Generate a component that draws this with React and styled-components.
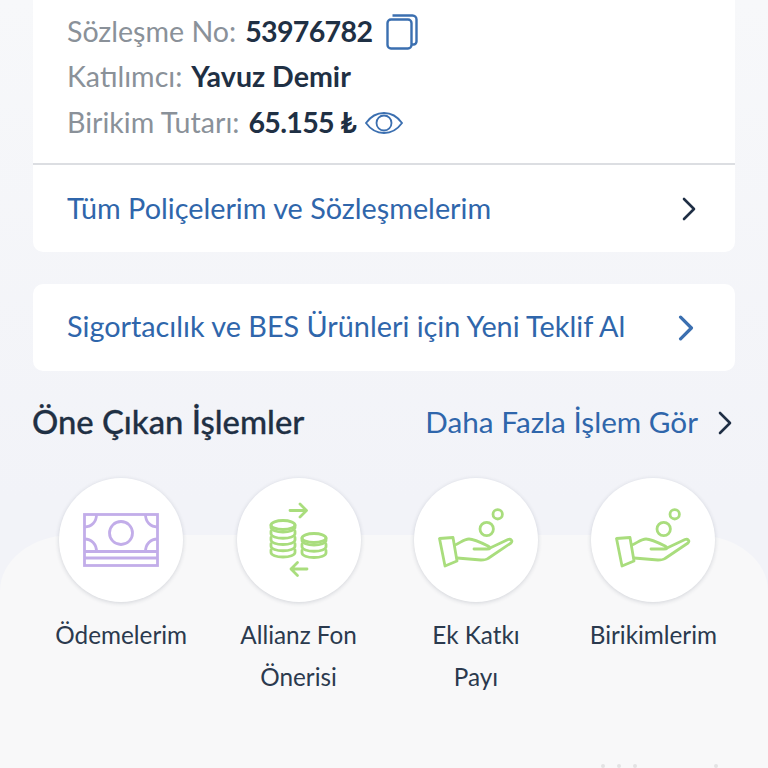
import React from "react";
import styled, { createGlobalStyle } from "styled-components";

const GlobalStyle = createGlobalStyle`
  html, body {
    margin: 0;
    padding: 0;
    background: #f2f3f8;
  }
  * {
    box-sizing: border-box;
  }
`;

const actions = [
  { id: "pay", lines: ["Ödemelerim"], icon: <MoneyIcon /> },
  { id: "fund", lines: ["Allianz Fon", "Önerisi"], icon: <CoinsIcon /> },
  { id: "extra", lines: ["Ek Katkı", "Payı"], icon: <HandIcon /> },
  { id: "savings", lines: ["Birikimlerim"], icon: <HandIcon /> },
];

function MoneyIcon() {
  return (
    <svg width="76" height="54" viewBox="0 0 76 54" fill="none" stroke="#c2ade9" strokeWidth="2.8">
      <rect x="1.5" y="1.5" width="73" height="51" />
      <path d="M1.5 38.5h73M1.5 45h73" />
      <circle cx="38" cy="20" r="11.5" />
      <path d="M1.5 14c7 0 12-5 12-12.500M74.500 14c-7 0-12-5-12-12.500M1.500 26c7 0 12 5 12 12.500M74.500 26c-7 0-12 5-12 12.500" />
    </svg>
  );
}

function CoinStack({ cx, top, count }) {
  const items = [];
  for (let i = 0; i < count; i++) {
    items.push(
      <path key={i} d={`M${cx - 12} ${top + 4 + i * 6.25}v2.500c0 2.500 5.300 4.500 12 4.500s12-2 12-4.500v-2.500`} />
    );
  }
  return (
    <>
      <ellipse cx={cx} cy={top + 4} rx="12" ry="4.500" />
      {items}
    </>
  );
}

function CoinsIcon() {
  return (
    <svg width="60" height="76" viewBox="0 0 60 76" fill="none" stroke="#a9dd7d" strokeWidth="2.8" strokeLinecap="round" strokeLinejoin="round">
      <path d="M21 8.500h16M31 2l6.500 6.500L31 15" />
      <CoinStack cx={14} top={19} count={5} />
      <CoinStack cx={45} top={32} count={3} />
      <path d="M38 67H22M28.500 60.500L22 67l6.500 6.500" />
    </svg>
  );
}

function HandIcon() {
  return (
    <svg width="76" height="64" viewBox="0 0 76 64" fill="none" stroke="#a9dd7d" strokeWidth="2.8" strokeLinecap="round" strokeLinejoin="round">
      <circle cx="48.700" cy="21" r="6.700" />
      <circle cx="59.700" cy="6.300" r="4.700" />
      <path d="M1.500 30.500L15 29.500 19 53 7 58z" />
      <path d="M17 37c5-2 9-6 14-6 5 0 13 4 19 7 3 2 2 3-1 3H36" />
      <path d="M52 40l18-8.500c3-1 5 1.500 3 3.500L50 50.500c-2 1.500-4 1.500-7 1.500L19 50" />
    </svg>
  );
}

const Chevron = ({ color = "#1f2f45", size = 24, width = 2.600 }) => (
  <svg width={size} height={size} viewBox="0 0 24 24" fill="none" stroke={color} strokeWidth={width} strokeLinecap="round" strokeLinejoin="round">
    <path d="M7 2l10 10L7 22" />
  </svg>
);

const CopyIcon = () => (
  <CopyWrap>
    <svg width="32" height="36" viewBox="0 0 32 36" fill="none" stroke="#3b6fb0" strokeWidth="2.400" strokeLinejoin="round">
      <rect x="1.500" y="5.500" width="24" height="29" rx="3.500" />
      <path d="M6.500 1.500h20a4 4 0 0 1 4 4v22a3 3 0 0 1-3 3h-2" />
    </svg>
  </CopyWrap>
);

const EyeIcon = () => (
  <svg width="38" height="24" viewBox="0 0 38 24" fill="none" stroke="#3b6fb0" strokeWidth="1.800">
    <path d="M1 12C6 5 12 2 19 2s13 3 18 10c-5 7-11 10-18 10S6 19 1 12z" />
    <circle cx="19" cy="12" r="7.500" />
  </svg>
);

export default function App() {
  return (
    <Page>
      <GlobalStyle />
      <LowerPanel />
      <Card>
        <Details>
          <DetailRow>
            <Label>Sözleşme No:</Label>
            <Value $digits>53976782</Value>
            <CopyIcon />
          </DetailRow>
          <DetailRow>
            <Label>Katılımcı:</Label>
            <Value>Yavuz Demir</Value>
          </DetailRow>
          <DetailRow>
            <Label>Birikim Tutarı:</Label>
            <Value $digits>65.155 ₺</Value>
            <EyeIcon />
          </DetailRow>
        </Details>
        <CardLink>
          <LinkText $lift={2}>Tüm Poliçelerim ve Sözleşmelerim</LinkText>
          <Chevron />
        </CardLink>
      </Card>
      <OfferCard>
        <LinkText $lift={4}>Sigortacılık ve BES Ürünleri için Yeni Teklif Al</LinkText>
        <Chevron color="#3b6fb0" size={26} width={3} />
      </OfferCard>
      <SectionHeader>
        <SectionTitle>Öne Çıkan İşlemler</SectionTitle>
        <MoreLink>
          <LinkText $size={29.700} $lift={4}>Daha Fazla İşlem Gör</LinkText>
          <Chevron />
        </MoreLink>
      </SectionHeader>
      <ActionGrid>
        {actions.map((action) => (
          <Action key={action.id}>
            <ActionCircle>{action.icon}</ActionCircle>
            <ActionLabel>
              {action.lines.map((line) => (
                <span key={line}>{line}</span>
              ))}
            </ActionLabel>
          </Action>
        ))}
      </ActionGrid>
      <CutOffMarks>
        <Mark />
        <Mark />
        <Mark />
        <Mark $far />
      </CutOffMarks>
    </Page>
  );
}

const Page = styled.div`
  position: relative;
  width: 768px;
  height: 768px;
  overflow: hidden;
  padding: 0 33px;
  background: linear-gradient(180deg, #f7f8fa 0%, #f2f3f8 65%);
  font-family: "Lato", "Noto Sans", sans-serif;
`;

const LowerPanel = styled.div`
  position: absolute;
  left: 0;
  right: 0;
  top: 535px;
  bottom: 0;
  background: #f8f8f9;
  border-radius: 72px 72px 0 0 / 56px 56px 0 0;
`;

const Card = styled.section`
  position: relative;
  height: 252px;
  background: #fff;
  border-radius: 0 0 10px 10px;
`;

const Details = styled.div`
  height: 165px;
  padding: 9px 34px 0;
  border-bottom: 2px solid #dcdee2;
`;

const DetailRow = styled.div`
  display: flex;
  align-items: center;
  gap: 9px;
  height: 46px;
  font-size: 28.600px;

  &:first-child {
    height: 45px;
  }
`;

const Label = styled.span`
  padding-bottom: 2px;
  color: #8a9199;
`;

const Value = styled.span`
  padding-bottom: 2px;
  color: #1f3044;
  font-weight: 700;
  letter-spacing: ${(p) => (p.$digits ? "-0.700px" : "0")};
`;

const CopyWrap = styled.span`
  display: flex;
  margin-left: 5px;
`;

const CardLink = styled.a`
  display: flex;
  align-items: center;
  justify-content: space-between;
  height: 87px;
  padding: 0 34px;
`;

const LinkText = styled.span`
  padding-bottom: ${(p) => p.$lift || 0}px;
  color: #2f66ab;
  font-size: ${(p) => p.$size || 28.800}px;
  white-space: nowrap;
`;

const OfferCard = styled.a`
  position: relative;
  display: flex;
  align-items: center;
  justify-content: space-between;
  height: 87px;
  margin-top: 32px;
  padding: 0 36px 0 34px;
  background: #fff;
  border-radius: 10px;
`;

const SectionHeader = styled.div`
  position: relative;
  display: flex;
  align-items: center;
  justify-content: space-between;
  margin: 30px -2px 0 -1px;
  height: 44px;
`;

const SectionTitle = styled.h2`
  margin: 0;
  padding-bottom: 4px;
  color: #1f3044;
  font-size: 32.800px;
  font-weight: 500;
  -webkit-text-stroke: 0.300px #1f3044;
`;

const MoreLink = styled.a`
  display: flex;
  align-items: center;
  gap: 15px;
`;

const ActionGrid = styled.div`
  position: relative;
  display: grid;
  grid-template-columns: repeat(4, 177.400px);
  margin: 33px 0 0 -0.500px;
`;

const Action = styled.div`
  display: flex;
  flex-direction: column;
  align-items: center;
`;

const ActionCircle = styled.div`
  display: flex;
  align-items: center;
  justify-content: center;
  width: 124px;
  height: 124px;
  border-radius: 50%;
  background: #fff;
  box-shadow: 0 1px 4px rgba(40, 50, 70, 0.18);
`;

const ActionLabel = styled.div`
  display: flex;
  flex-direction: column;
  align-items: center;
  margin-top: 12px;
  color: #2b3a4e;
  font-size: 24.300px;
  line-height: 42px;
`;

const CutOffMarks = styled.div`
  position: absolute;
  right: 50px;
  bottom: 0;
  display: flex;
  gap: 12px;
`;

const Mark = styled.span`
  width: 4px;
  height: 4px;
  margin-left: ${(p) => (p.$far ? "65px" : "0")};
  border-radius: 50%;
  background: #e3e3e4;
`;
